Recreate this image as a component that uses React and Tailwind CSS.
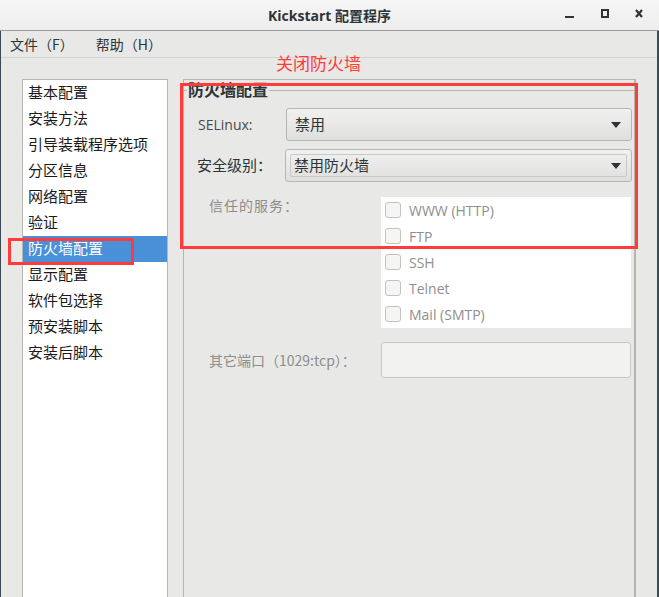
import React from "react";

const navItems = [
  "基本配置",
  "安装方法",
  "引导装载程序选项",
  "分区信息",
  "网络配置",
  "验证",
  "防火墙配置",
  "显示配置",
  "软件包选择",
  "预安装脚本",
  "安装后脚本",
];

const services = ["WWW (HTTP)", "FTP", "SSH", "Telnet", "Mail (SMTP)"];

const cjk = "font-['Noto_Sans_CJK_SC',sans-serif]";
const latin = "font-['Open_Sans','Noto_Sans_CJK_SC',sans-serif]";

const Caret = () => (
  <svg width="10" height="6" viewBox="0 0 10 6" className="shrink-0">
    <path d="M0 0 H10 L5 6 Z" fill="#2e3436" />
  </svg>
);

const Combo = ({ value, inner }) => (
  <div className="flex-1 h-[33px] rounded-[3px] border border-[#b6b6b3] bg-gradient-to-b from-[#f1f1f0] to-[#dfdfdd] p-[4px] flex">
    <div
      className={`flex-1 flex items-center pl-[3px] pr-[5px] rounded-[2px] ${
        inner ? "border border-[#c9c9c6]" : "border border-transparent"
      }`}
    >
      <span className={`flex-1 text-[15px] text-[#2e3436] ${cjk}`}>{value}</span>
      <Caret />
    </div>
  </div>
);

export default function App() {
  return (
    <div className="relative w-[659px] h-[597px] overflow-hidden bg-[#e8e8e7] flex flex-col">
      {/* Title bar */}
      <div className="h-[31px] shrink-0 bg-gradient-to-b from-[#f6f6f6] to-[#ededed] border-b border-[#9a9c9a] flex items-center relative">
        <div className={`flex-1 text-center font-bold text-[14px] text-[#2e3436] ${latin}`}>
          Kickstart 配置程序
        </div>
        <div className="absolute right-[16px] top-[8px] flex items-center">
          <div className="w-[9px] h-[10px] flex items-end">
            <div className="w-[9px] h-[2px] bg-[#2e3436]" />
          </div>
          <div className="ml-[27px] w-[8px] h-[9px] border-2 border-[#2e3436]" />
          <svg width="8" height="9" viewBox="0 0 8 9" className="ml-[26px]">
            <path d="M1 1 L7 8 M7 1 L1 8" stroke="#2e3436" strokeWidth="2.2" />
          </svg>
        </div>
      </div>

      <div className="flex-1 flex border-l border-[#3c4a58]">
        <div className="flex-1 flex flex-col">
          {/* Menu bar */}
          <div className={`h-[27px] shrink-0 flex items-center text-[14px] text-[#2e3436] border-b border-[#d4d4d2] ${cjk}`}>
            <span className="ml-[9px]">文件（F）</span>
            <span className="ml-[22px]">帮助（H）</span>
          </div>

          {/* Body */}
          <div className="flex-1 flex pt-[21px] pl-[21px]">
            {/* Left list */}
            <div className="w-[146px] h-[560px] shrink-0 bg-white border border-[#b6b6b3]">
              {navItems.map((item) => {
                const active = item === "防火墙配置";
                return (
                  <div
                    key={item}
                    className={`h-[26px] flex items-center pl-[5px] pb-[2px] text-[15px] ${cjk} ${
                      active ? "bg-[#4a90d9] text-white" : "text-[#1a1a1a]"
                    }`}
                  >
                    {item}
                  </div>
                );
              })}
            </div>

            {/* Right panel */}
            <div className="ml-[15px] w-[453px] h-[560px] shrink-0 border-l border-t border-r-2 border-[#b5b5b2] pt-[1px]">
              <div className="flex items-center h-[18px]">
                <div className="w-[3px] h-px bg-[#b5b5b2]" />
                <span className={`mx-[1px] text-[16px] font-bold text-[#2e3436] leading-none pb-[2px] ${cjk}`}>
                  防火墙配置
                </span>
                <div className="flex-1 h-px bg-[#b5b5b2]" />
              </div>

              <div className="pl-[14px] pr-[2px] pt-[9px]">
                <div className="flex items-center">
                  <span className={`w-[88px] text-[14px] text-[#4a4a4a] ${latin}`}>SELinux:</span>
                  <Combo value="禁用" />
                </div>
                <div className="flex items-center mt-[8px]">
                  <span className={`w-[88px] -ml-[1px] text-[15px] text-[#2e3436] ${cjk}`}>安全级别：</span>
                  <Combo value="禁用防火墙" inner />
                </div>

                <div className="flex mt-[15px]">
                  <span className={`w-[183px] pl-[11px] pt-[1px] leading-[14px] text-[14px] text-[#8d8d8b] tracking-[1px] ${cjk}`}>
                    信任的服务：
                  </span>
                  <div className="flex-1 bg-white pb-[1px] mr-[1px]">
                    {services.map((s) => (
                      <div key={s} className="h-[26px] flex items-center pl-[4px]">
                        <div className="w-[16px] h-[16px] rounded-[3px] border border-[#c2c2bf] bg-[#f5f5f4]" />
                        <span className={`ml-[8px] text-[14px] text-[#8f8f8d] ${latin}`}>{s}</span>
                      </div>
                    ))}
                  </div>
                </div>

                <div className="flex items-center mt-[14px]">
                  <span className={`w-[183px] pl-[11px] text-[14px] text-[#8d8d8b] ${cjk}`}>
                    其它端口（1029:tcp）：
                  </span>
                  <div className="flex-1 h-[36px] mr-[1px] rounded-[3px] border border-[#c8c8c5] bg-[#f2f2f1]" />
                </div>
              </div>
            </div>

            <div className="flex-1" />
          </div>
        </div>
        <div className="w-[2px] bg-[#3c4a58]" />
      </div>

      {/* Annotations */}
      <div className={`absolute left-[276px] top-[52px] text-[17px] leading-[22px] text-[#ff3b3b] ${cjk}`}>
        关闭防火墙
      </div>
      <div className="absolute left-[180px] top-[83px] w-[458px] h-[166px] border-[3px] border-[#ff3b3b]" />
      <div className="absolute left-[8px] top-[238px] w-[126px] h-[27px] border-[3px] border-[#ff3b3b]" />
    </div>
  );
}
